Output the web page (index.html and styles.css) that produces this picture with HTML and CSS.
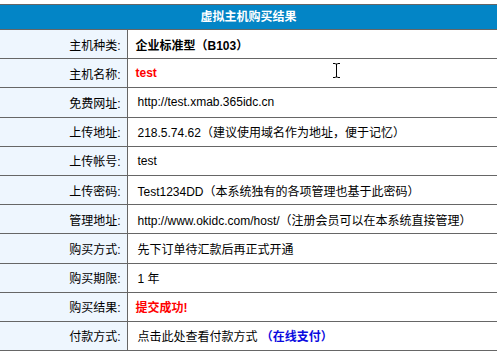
FILE: index.html
```html
<!DOCTYPE html>
<html lang="zh-CN">
<head>
<meta charset="utf-8">
<title>虚拟主机购买结果</title>
<link rel="stylesheet" href="styles.css">
</head>
<body>
<table class="result">
  <colgroup>
    <col class="col-label">
    <col class="col-value">
  </colgroup>
  <thead>
    <tr><th colspan="2" class="title">虚拟主机购买结果</th></tr>
  </thead>
  <tbody>
    <tr><td class="label">主机种类:</td><td class="value bold">企业标准型（B103）</td></tr>
    <tr><td class="label">主机名称:</td><td class="value bold red">test</td></tr>
    <tr><td class="label">免费网址:</td><td class="value">http://test.xmab.365idc.cn</td></tr>
    <tr><td class="label">上传地址:</td><td class="value">218.5.74.62（建议使用域名作为地址，便于记忆）</td></tr>
    <tr><td class="label">上传帐号:</td><td class="value">test</td></tr>
    <tr><td class="label">上传密码:</td><td class="value">Test1234DD（本系统独有的各项管理也基于此密码）</td></tr>
    <tr><td class="label">管理地址:</td><td class="value">http://www.okidc.com/host/（注册会员可以在本系统直接管理）</td></tr>
    <tr><td class="label">购买方式:</td><td class="value">先下订单待汇款后再正式开通</td></tr>
    <tr><td class="label">购买期限:</td><td class="value">1 年</td></tr>
    <tr><td class="label">购买结果:</td><td class="value bold red">提交成功!</td></tr>
    <tr><td class="label">付款方式:</td><td class="value">点击此处查看付款方式 <span class="link">（在线支付）</span></td></tr>
  </tbody>
</table>
<svg class="cursor" width="9" height="17" viewBox="0 0 9 17" aria-hidden="true">
  <path d="M1 1.5h2.5M5.5 1.5h2.5M4.5 2v13M1 15.5h2.5M5.5 15.5h2.5M3.5 2h2M3.5 15h2" stroke="#000" stroke-width="1" fill="none"/>
</svg>
</body>
</html>
```

FILE: styles.css
```css
html, body {
  margin: 0;
  padding: 0;
  background: #ffffff;
}

body {
  font-family: "Liberation Sans", "Noto Sans CJK SC", sans-serif;
  font-size: 12px;
  color: #000;
}

.result {
  margin-top: 4px;
  width: 497px;
  border-collapse: collapse;
  table-layout: fixed;
}

.col-label {
  width: 127px;
}

.result th,
.result td {
  padding: 0;
  border-bottom: 1px solid #666666;
}

.title {
  border-top: 1px solid #666666;
  height: 24px;
  background: #0385c6;
  color: #ffffff;
  font-weight: bold;
  text-align: center;
  font-size: 12px;
  line-height: 24px;
}

.label {
  height: 28.2px;
  background: #eef6fe;
  border-right: 1px solid #666666;
  text-align: right;
  padding-right: 6px !important;
  white-space: nowrap;
}

.value {
  padding-left: 10px !important;
  white-space: nowrap;
  overflow: hidden;
}

.bold {
  font-weight: bold;
  padding-left: 8px !important;
}

.red {
  color: #ff0000;
}

.link {
  color: #0a0ae0;
  font-weight: bold;
}

.cursor {
  position: absolute;
  left: 332px;
  top: 62px;
}
```
